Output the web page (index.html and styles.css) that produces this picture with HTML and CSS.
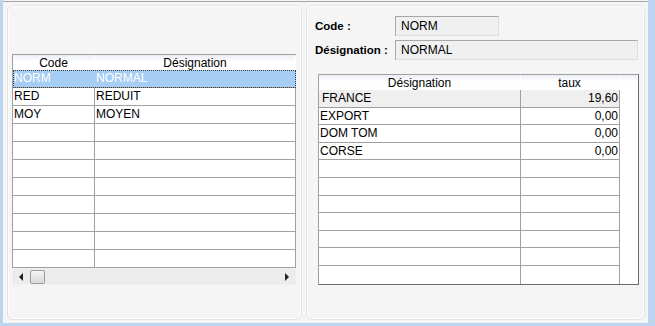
FILE: index.html
```html
<!DOCTYPE html>
<html lang="fr">
<head>
    <meta charset="UTF-8">
    <title>Taux TVA</title>
    <link rel="stylesheet" href="styles.css">
</head>
<body>
<div class="frame">
    <div class="window">
        <div class="panel panel-left">
            <div class="grid lgrid">
                <div class="row head">
                    <div class="cell c-code">Code</div>
                    <div class="cell c-des">Désignation</div>
                </div>
                <div class="row selected">
                    <div class="cell c-code">NORM</div>
                    <div class="cell c-des">NORMAL</div>
                </div>
                <div class="row">
                    <div class="cell c-code">RED</div>
                    <div class="cell c-des">REDUIT</div>
                </div>
                <div class="row">
                    <div class="cell c-code">MOY</div>
                    <div class="cell c-des">MOYEN</div>
                </div>
                <div class="row"><div class="cell c-code"></div><div class="cell c-des"></div></div>
                <div class="row"><div class="cell c-code"></div><div class="cell c-des"></div></div>
                <div class="row"><div class="cell c-code"></div><div class="cell c-des"></div></div>
                <div class="row"><div class="cell c-code"></div><div class="cell c-des"></div></div>
                <div class="row"><div class="cell c-code"></div><div class="cell c-des"></div></div>
                <div class="row"><div class="cell c-code"></div><div class="cell c-des"></div></div>
                <div class="row"><div class="cell c-code"></div><div class="cell c-des"></div></div>
                <div class="row"><div class="cell c-code"></div><div class="cell c-des"></div></div>
            </div>
            <div class="hscroll">
                <span class="arrow arrow-left"></span>
                <span class="thumb"></span>
                <span class="track"></span>
                <span class="arrow arrow-right"></span>
            </div>
        </div>

        <div class="panel panel-right">
            <div class="field">
                <label class="field-label">Code :</label>
                <div class="field-box box-code">NORM</div>
            </div>
            <div class="field">
                <label class="field-label">Désignation :</label>
                <div class="field-box box-des">NORMAL</div>
            </div>

            <div class="grid rgrid">
                <div class="row head">
                    <div class="cell r-des">Désignation</div>
                    <div class="cell r-taux">taux</div>
                    <div class="cell r-fill"></div>
                </div>
                <div class="row current">
                    <div class="cell r-des">FRANCE</div>
                    <div class="cell r-taux">19,60</div>
                    <div class="cell r-fill"></div>
                </div>
                <div class="row">
                    <div class="cell r-des">EXPORT</div>
                    <div class="cell r-taux">0,00</div>
                    <div class="cell r-fill"></div>
                </div>
                <div class="row">
                    <div class="cell r-des">DOM TOM</div>
                    <div class="cell r-taux">0,00</div>
                    <div class="cell r-fill"></div>
                </div>
                <div class="row">
                    <div class="cell r-des">CORSE</div>
                    <div class="cell r-taux">0,00</div>
                    <div class="cell r-fill"></div>
                </div>
                <div class="row"><div class="cell r-des"></div><div class="cell r-taux"></div><div class="cell r-fill"></div></div>
                <div class="row"><div class="cell r-des"></div><div class="cell r-taux"></div><div class="cell r-fill"></div></div>
                <div class="row"><div class="cell r-des"></div><div class="cell r-taux"></div><div class="cell r-fill"></div></div>
                <div class="row"><div class="cell r-des"></div><div class="cell r-taux"></div><div class="cell r-fill"></div></div>
                <div class="row"><div class="cell r-des"></div><div class="cell r-taux"></div><div class="cell r-fill"></div></div>
                <div class="row"><div class="cell r-des"></div><div class="cell r-taux"></div><div class="cell r-fill"></div></div>
                <div class="row"><div class="cell r-des"></div><div class="cell r-taux"></div><div class="cell r-fill"></div></div>
            </div>
        </div>
    </div>
</div>
</body>
</html>
```

FILE: styles.css
```css
* {
    box-sizing: border-box;
}

body {
    margin: 0;
    font-family: 'Liberation Sans', Arial, sans-serif;
    font-size: 12px;
    color: #000;
    background-color: #f4f4f4;
}

.frame {
    height: 326px;
    padding-top: 1px;
    border-left: 3px solid #bcd4ee;
    border-right: 7px solid #bcd4ee;
    border-bottom: 3px solid #bcd4ee;
}

.window {
    display: flex;
    gap: 4px;
    height: 100%;
    padding: 3px 3px 3px 4px;
    border-top: 1px solid #a6a6a6;
    background-color: #f5f5f5;
}

.panel {
    border: 1px solid #e4e4e4;
    border-radius: 6px;
    box-shadow: inset 0 0 0 1px #ffffff;
    background-color: #f5f5f5;
}

.panel-left {
    width: 295px;
    padding: 48px 0 0 4px;
}

.panel-right {
    flex: 1;
    padding: 10px 0 0 8px;
}

/* grids */
.grid {
    background-color: #fff;
}

.row {
    display: flex;
}

.cell {
    height: 100%;
    padding-left: 1px;
    white-space: nowrap;
    overflow: hidden;
    border-right: 1px solid #a0a0a0;
    border-bottom: 1px solid #a0a0a0;
}

.row.head .cell {
    text-align: center;
    padding-left: 0;
    border-right: 1px solid #fff;
    border-bottom: none;
    background: linear-gradient(#eceef8, #ffffff 45%);
}

.lgrid {
    width: 284px;
    border-left: 1px solid #a0a0a0;
    border-top: 1px solid #a0a0a0;
}

.lgrid .row {
    height: 18px;
    line-height: 17px;
}

.lgrid .row.head {
    height: 15px;
    line-height: 16px;
}

.lgrid .c-code {
    width: 82px;
}

.lgrid .c-des {
    width: 201px;
}

.lgrid .row.selected {
    background-color: #a6cdf3;
    color: #fff;
    outline: 1px dotted #3a3a3a;
    outline-offset: -1px;
}

.lgrid .row.selected .cell {
    border-right-color: #a6cdf3;
}

/* horizontal scrollbar */
.hscroll {
    display: flex;
    align-items: center;
    width: 284px;
    height: 17px;
    background-color: #ececec;
    border: 1px solid #f0f0f0;
}

.arrow {
    width: 0;
    height: 0;
    border-top: 4px solid transparent;
    border-bottom: 4px solid transparent;
}

.arrow-left {
    margin-left: 6px;
    border-right: 4px solid #222;
}

.arrow-right {
    margin-right: 6px;
    border-left: 4px solid #222;
}

.thumb {
    width: 15px;
    height: 14px;
    margin-left: 7px;
    border: 1px solid #9c9c9c;
    border-radius: 2px;
    background: linear-gradient(#f4f4f4, #dadada);
}

.track {
    flex: 1;
}

/* fields */
.field {
    display: flex;
    align-items: flex-end;
    margin-bottom: 4px;
}

.field-label {
    width: 80px;
    font-weight: bold;
    font-size: 11.5px;
    line-height: 14px;
    padding-bottom: 3px;
}

.field-box {
    height: 20px;
    padding-left: 5px;
    border: 1px solid #a8a8a8;
    border-right-color: #dedede;
    border-bottom-color: #dedede;
    background-color: #f0f0f0;
}

.box-code {
    width: 104px;
    padding-top: 2px;
    line-height: 14px;
}

.box-des {
    width: 243px;
    line-height: 19px;
}

/* right grid */
.rgrid {
    width: 321px;
    margin: 14px 0 0 3px;
    border-left: 1px solid #a0a0a0;
    border-top: 1px solid #a0a0a0;
    border-right: 1px solid #6a6a6a;
    border-bottom: 1px solid #6a6a6a;
}

.rgrid .row {
    height: 17.6px;
    line-height: 17px;
}

.rgrid .row.head {
    height: 15px;
    line-height: 16px;
}

.rgrid .r-des {
    width: 202px;
}

.rgrid .r-taux {
    width: 99px;
    text-align: right;
    padding-right: 1px;
}

.rgrid .r-fill {
    flex: 1;
    border-right: none;
    border-bottom: none;
}

.rgrid .row:last-child .r-des,
.rgrid .row:last-child .r-taux {
    border-bottom: none;
}

.rgrid .row.current .r-des,
.rgrid .row.current .r-taux {
    background-color: #efefef;
}

.rgrid .row.current .r-des {
    padding-left: 3px;
}
```
